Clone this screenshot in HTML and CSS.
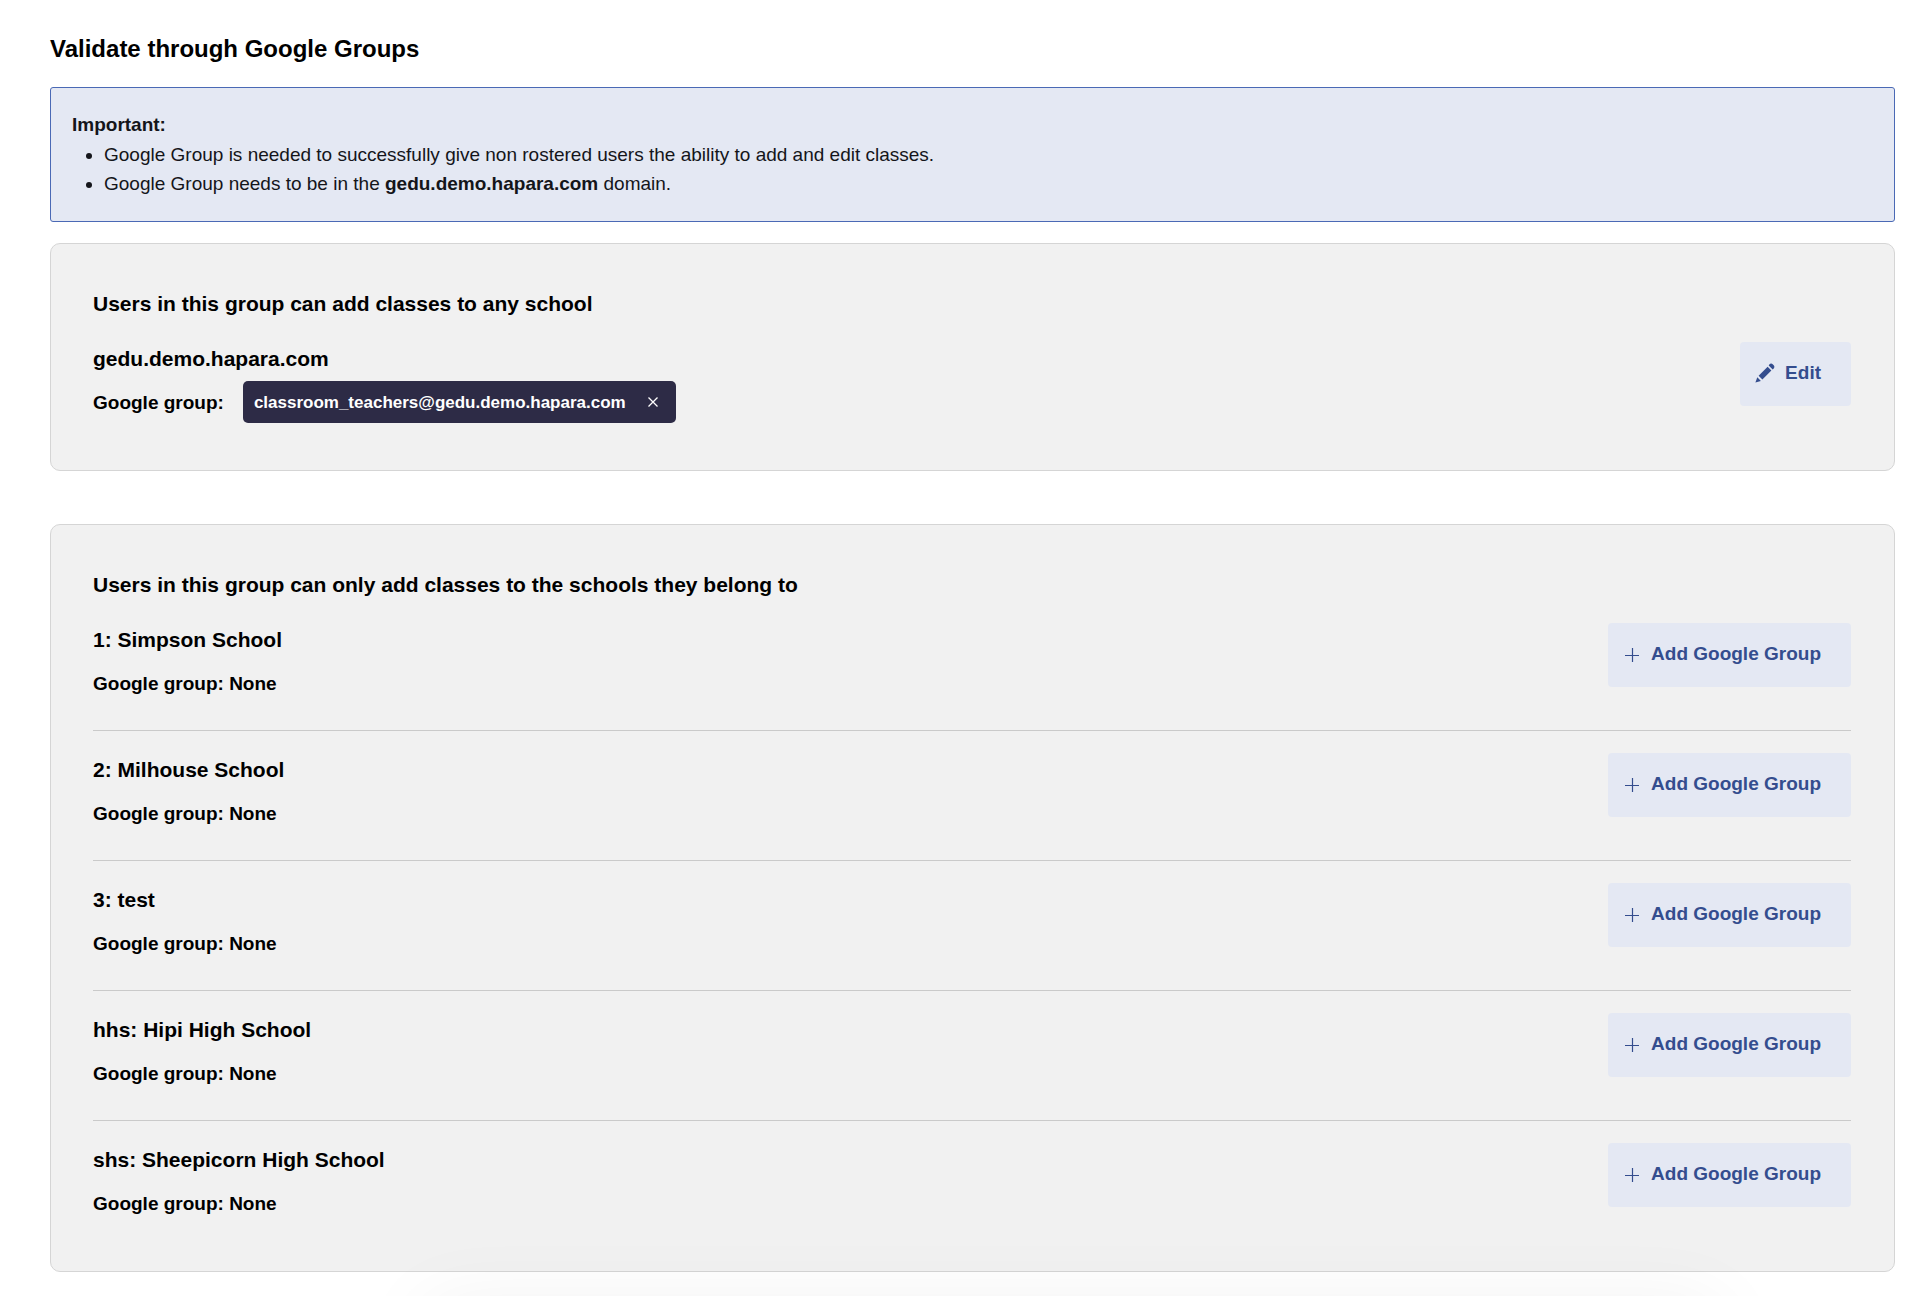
FILE: index.html
```
<!DOCTYPE html>
<html lang="en">
<head>
  <meta charset="utf-8">
  <title>Validate through Google Groups</title>
  <link rel="stylesheet" href="styles.css">
</head>
<body>

<!-- Icons used by the buttons -->
<svg class="sprite" aria-hidden="true">
  <symbol id="icon-plus" viewBox="0 0 14 14">
    <path d="M7.500 0v14M0 7.500h14" stroke="currentColor" stroke-width="1.200"/>
  </symbol>
  <symbol id="icon-close" viewBox="0 0 10 10">
    <path d="M.5.5l9 9M9.500.5l-9 9" stroke="currentColor" stroke-width="1.300"/>
  </symbol>
  <symbol id="icon-pencil" viewBox="0 0 20 20">
    <path d="M13.700 2.400l4 4 1-1c.9-.9.900-2.300 0-3.200l-1-1c-.9-.9-2.300-.9-3.200 0z" fill="currentColor"/>
    <path d="M12.600 3.700l3.800 3.800-9 9-3.800-3.800z" fill="currentColor"/>
    <path d="M2.300 14.300l3.600 3.600L.4 19.500z" fill="currentColor"/>
  </symbol>
</svg>

<main class="page">
  <h1>Validate through Google Groups</h1>

  <div class="notice">
    <strong>Important:</strong>
    <ul>
      <li>Google Group is needed to successfully give non rostered users the ability to add and edit classes.</li>
      <li>Google Group needs to be in the <strong>gedu.demo.hapara.com</strong> domain.</li>
    </ul>
  </div>

  <section class="card">
    <h2>Users in this group can add classes to any school</h2>
    <div class="row">
      <div class="info">
        <h3>gedu.demo.hapara.com</h3>
        <div class="group">
          Google group:
          <span class="chip">classroom_teachers@gedu.demo.hapara.com
            <button class="chip-close" type="button" aria-label="Remove"><svg><use href="#icon-close"/></svg></button>
          </span>
        </div>
      </div>
      <button class="button" type="button"><svg class="pencil"><use href="#icon-pencil"/></svg>Edit</button>
    </div>
  </section>

  <section class="card">
    <h2>Users in this group can only add classes to the schools they belong to</h2>
    <div class="row">
      <div class="info">
        <h3>1: Simpson School</h3>
        <div class="group">Google group: None</div>
      </div>
      <button class="button" type="button"><svg class="plus"><use href="#icon-plus"/></svg>Add Google Group</button>
    </div>
    <div class="row">
      <div class="info">
        <h3>2: Milhouse School</h3>
        <div class="group">Google group: None</div>
      </div>
      <button class="button" type="button"><svg class="plus"><use href="#icon-plus"/></svg>Add Google Group</button>
    </div>
    <div class="row">
      <div class="info">
        <h3>3: test</h3>
        <div class="group">Google group: None</div>
      </div>
      <button class="button" type="button"><svg class="plus"><use href="#icon-plus"/></svg>Add Google Group</button>
    </div>
    <div class="row">
      <div class="info">
        <h3>hhs: Hipi High School</h3>
        <div class="group">Google group: None</div>
      </div>
      <button class="button" type="button"><svg class="plus"><use href="#icon-plus"/></svg>Add Google Group</button>
    </div>
    <div class="row">
      <div class="info">
        <h3>shs: Sheepicorn High School</h3>
        <div class="group">Google group: None</div>
      </div>
      <button class="button" type="button"><svg class="plus"><use href="#icon-plus"/></svg>Add Google Group</button>
    </div>
  </section>
</main>

<div class="bottom-shadow"></div>

</body>
</html>
```

FILE: styles.css
```
* {
  box-sizing: border-box;
}

body {
  margin: 0;
  font-family: "Liberation Sans", Arial, sans-serif;
  font-size: 19px;
  line-height: 29px;
  color: #000;
  background-color: #fff;
}

h1, h2, h3, ul {
  margin: 0;
}

.sprite {
  display: none;
}

.page {
  padding: 32px 37px 24px 50px;
}

h1 {
  font-size: 24px;
  line-height: 34px;
  margin-bottom: 21px;
}

.notice {
  padding: 22px 21px 23px;
  margin-bottom: 21px;
  color: #14151a;
  background-color: #e4e8f3;
  border: 1px solid #4a69b5;
  border-radius: 3px;
}

.notice ul {
  padding: 1px 0 0 32px;
}

.card {
  padding: 44px 43px 21px 42px;
  margin-bottom: 53px;
  background-color: #f1f1f1;
  border: 1px solid #d5d5d5;
  border-radius: 10px;
}

h2 {
  font-size: 21px;
  line-height: 32px;
}

.row {
  display: flex;
  justify-content: space-between;
  align-items: flex-start;
  padding: 22px 0 21px;
}

.row + .row {
  border-top: 1px solid #cacaca;
}

h3 {
  font-size: 21px;
  line-height: 34px;
}

.group {
  display: flex;
  align-items: center;
  gap: 19px;
  height: 52px;
  font-weight: bold;
}

.chip {
  display: flex;
  align-items: center;
  gap: 17px;
  height: 42px;
  padding: 0 13px 0 11px;
  font-size: 17px;
  color: #fff;
  background-color: #2d2b46;
  border-radius: 5px;
}

.chip-close {
  display: flex;
  padding: 5px;
  color: inherit;
  background: none;
  border: none;
  cursor: pointer;
}

.chip-close svg {
  width: 10px;
  height: 10px;
}

.button {
  display: flex;
  align-items: center;
  height: 64px;
  padding: 0 30px 2px 15px;
  font-family: inherit;
  font-size: 19px;
  font-weight: bold;
  color: #344d8e;
  background-color: #e4e8f3;
  border: none;
  border-radius: 4px;
  cursor: pointer;
}

.button:hover {
  background-color: #d6dcee;
}

.pencil {
  width: 20px;
  height: 20px;
  margin-right: 10px;
}

.plus {
  width: 14px;
  height: 14px;
  margin: 2px 12px 0 2px;
}

/* soft shade along the bottom of the window */
.bottom-shadow {
  position: fixed;
  top: 100%;
  left: 22%;
  right: 11%;
  height: 200px;
  box-shadow: 0 8px 80px rgba(0, 0, 0, 0.06);
  pointer-events: none;
}
```
